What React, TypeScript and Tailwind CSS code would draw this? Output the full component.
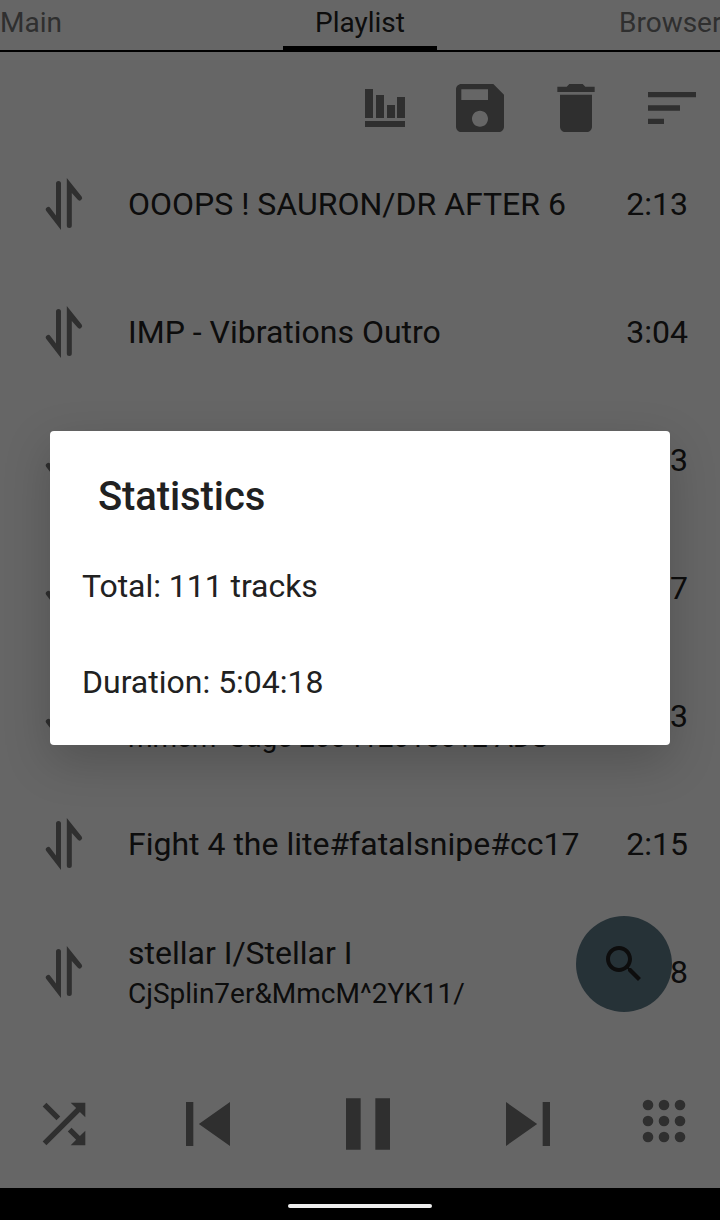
const Swap = () => (
  <svg width="40" height="56" viewBox="44 175 40 56" fill="#757575" className="shrink-0">
    <path d="M56 182.500a2.500 2.500 0 0 1 5 0V229L46.300 210a2.500 2.500 0 0 1 4-3L56 214.500z" />
    <path d="M71.800 224.500a2.500 2.500 0 0 1-5 0V177L81.600 195.500a2.500 2.500 0 0 1-4 3L71.800 192z" />
  </svg>
);

const Icon = ({ size = 64, d, fill = "#757575" }: { size?: number; d: string; fill?: string }) => (
  <svg width={size} height={size} viewBox="0 0 24 24" fill={fill}>
    <path d={d} />
  </svg>
);

const Row = ({ title, sub, time }: { title?: string; sub?: string; time: string }) => (
  <div className="h-[128px] flex items-center pl-[44px] pr-[32px]">
    <Swap />
    <div className={sub ? "ml-[44px] flex-1 min-w-0 pt-[3px]" : "ml-[44px] flex-1 min-w-0"}>
      {title && <div className="text-[32px] leading-[40px] text-[#212121] whitespace-nowrap">{title}</div>}
      {sub && <div className="pt-[1px] text-[28px] leading-[40px] text-[#212121] whitespace-nowrap">{sub}</div>}
    </div>
    <div className="text-[32px] leading-[40px] text-[#212121] ml-4">{time}</div>
  </div>
);

export default function App() {
  return (
    <div className="relative w-[720px] h-[1220px] overflow-hidden bg-white font-[Roboto,sans-serif]">
      <div className="flex h-[52px] border-b-2 border-black text-[28px] leading-[46px] overflow-hidden">
        <div className="w-[283px] shrink-0 text-[#757575]">Main</div>
        <div className="w-[154px] h-[52px] shrink-0 border-b-[6px] border-black text-center text-[#212121]">Playlist</div>
        <div className="w-[283px] shrink-0 pl-[182px] text-[#757575] whitespace-nowrap">Browser</div>
      </div>

      <div className="h-[88px] pt-[24px] flex justify-end">
        <div className="w-[96px] flex justify-center">
          <svg width="64" height="64" viewBox="0 0 64 64" fill="#757575">
            <path d="M13 13h8v29h-8zM24 19h8v23h-8zM35 29h8v13h-8zM45 21h8v21h-8zM13 45h40v6H13z" />
          </svg>
        </div>
        <div className="w-[96px] flex justify-center">
          <Icon d="M17 3H5c-1.110 0-2 .9-2 2v14c0 1.100.89 2 2 2h14c1.100 0 2-.9 2-2V7l-4-4zm-5 16c-1.660 0-3-1.340-3-3s1.340-3 3-3 3 1.340 3 3-1.340 3-3 3zm3-10H5V5h10v4z" />
        </div>
        <div className="w-[96px] flex justify-center">
          <Icon d="M6 19c0 1.100.9 2 2 2h8c1.100 0 2-.9 2-2V7H6v12zM19 4h-3.500l-1-1h-5l-1 1H5v2h14V4z" />
        </div>
        <div className="w-[96px] flex justify-center">
          <Icon d="M3 18h6v-2H3v2zM3 6v2h18V6H3zm0 7h12v-2H3v2z" />
        </div>
      </div>

      <div className="h-[920px] overflow-hidden">
        <Row title="OOOPS ! SAURON/DR AFTER 6" time="2:13" />
        <Row title="IMP - Vibrations Outro" time="3:04" />
        <Row time="3:03" />
        <Row time="2:17" />
        <Row title={"\u00a0"} sub="mmcm^Cage 200412010012 ADS" time="3:03" />
        <Row title="Fight 4 the lite#fatalsnipe#cc17" time="2:15" />
        <Row title="stellar I/Stellar I" sub="CjSplin7er&MmcM^2YK11/" time="2:48" />
      </div>

      <div className="h-[128px] grid grid-cols-[128px_160px_160px_160px_112px] items-center justify-items-center">
        <Icon d="M10.590 9.170L5.410 4 4 5.410l5.170 5.170 1.420-1.410zM14.500 4l2.040 2.040L4 18.590 5.410 20 17.960 7.460 20 9.500V4h-5.500zm.33 9.410l-1.410 1.410 3.130 3.130L14.500 20H20v-5.500l-2.040 2.040-3.130-3.130z" />
        <Icon size={88} d="M6 6h2v12H6zm3.500 6l8.500 6V6z" />
        <Icon size={88} d="M6 19h4V5H6v14zm8-14v14h4V5h-4z" />
        <Icon size={88} d="M6 18l8.500-6L6 6v12zM16 6v12h2V6h-2z" />
        <svg width="64" height="64" viewBox="0 0 64 64" fill="#757575">
          <circle cx="16" cy="13" r="5.300" /><circle cx="32" cy="13" r="5.300" /><circle cx="48" cy="13" r="5.300" />
          <circle cx="16" cy="29" r="5.300" /><circle cx="32" cy="29" r="5.300" /><circle cx="48" cy="29" r="5.300" />
          <circle cx="16" cy="45" r="5.300" /><circle cx="32" cy="45" r="5.300" /><circle cx="48" cy="45" r="5.300" />
        </svg>
      </div>

      <div className="absolute left-[576px] top-[916px] w-[96px] h-[96px] rounded-full bg-[#607d8b] flex items-center justify-center">
        <Icon size={48} fill="#212121" d="M15.500 14h-.79l-.28-.27C15.410 12.590 16 11.110 16 9.500 16 5.910 13.090 3 9.500 3S3 5.910 3 9.500 5.910 16 9.500 16c1.610 0 3.090-.59 4.230-1.570l.27.28v.79l5 4.990L20.490 19l-4.990-5zm-6 0C7.010 14 5 11.990 5 9.500S7.010 5 9.500 5 14 7.010 14 9.500 11.990 14 9.500 14z" />
      </div>

      <div className="absolute inset-0 bg-black/60" />

      <div className="absolute left-[50px] top-[431px] w-[620px] h-[314px] bg-white rounded shadow-[0_16px_48px_rgba(0,0,0,0.2)] text-[#212121]">
        <div className="pl-[48px] pt-[41px] text-[40px] leading-[50px] font-medium tracking-[-0.1px]">Statistics</div>
        <div className="pl-[32px] pt-[44px] text-[32px] leading-[40px] tracking-[-0.05px]">Total: 111 tracks</div>
        <div className="pl-[32px] pt-[56px] text-[32px] leading-[40px]">Duration: 5:04:18</div>
      </div>

      <div className="absolute left-0 right-0 bottom-0 h-[32px] bg-black pt-[16px]">
        <div className="mx-auto w-[144px] h-[4px] rounded-full bg-[#eeeeee]" />
      </div>
    </div>
  );
}
